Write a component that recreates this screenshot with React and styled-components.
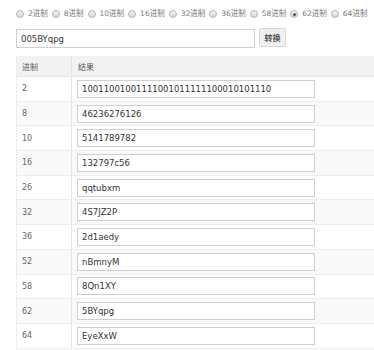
import React, { useState } from "react";
import styled, { createGlobalStyle } from "styled-components";

const GlobalStyle = createGlobalStyle`
  html, body {
    margin: 0;
    padding: 0;
    background: #ffffff;
  }
  body {
    font-family: "DejaVu Sans", Verdana, "Noto Sans CJK SC", sans-serif;
  }
`;

const bases = [2, 8, 10, 16, 32, 36, 58, 62, 64];

const results = [
  ["2", "10011001001111001011111100010101110"],
  ["8", "46236276126"],
  ["10", "5141789782"],
  ["16", "132797c56"],
  ["26", "qqtubxm"],
  ["32", "4S7JZ2P"],
  ["36", "2d1aedy"],
  ["52", "nBmnyM"],
  ["58", "8Qn1XY"],
  ["62", "5BYqpg"],
  ["64", "EyeXxW"],
];

function App() {
  const [base, setBase] = useState(62);
  const [value, setValue] = useState("005BYqpg");

  return (
    <Page>
      <GlobalStyle />
      <RadioRow>
        {bases.map((b) => (
          <Option key={b} onClick={() => setBase(b)}>
            <Dot $checked={base === b} />
            <span>{b}进制</span>
          </Option>
        ))}
      </RadioRow>

      <FormRow>
        <TextInput value={value} onChange={(e) => setValue(e.target.value)} />
        <Button>转换</Button>
      </FormRow>

      <Table>
        <thead>
          <tr>
            <Th $first>进制</Th>
            <Th>结果</Th>
          </tr>
        </thead>
        <tbody>
          {results.map(([b, r], i) => (
            <Row key={b} $striped={i % 2 === 1}>
              <BaseCell>{b}</BaseCell>
              <ResultCell>
                <ResultInput readOnly value={r} />
              </ResultCell>
            </Row>
          ))}
        </tbody>
      </Table>
    </Page>
  );
}

// STYLE COMPONENT
const Page = styled.div`
  padding: 8px 0 0 16px;
  font-size: 8px;
  color: #666;
`;

const RadioRow = styled.div`
  display: flex;
  align-items: center;
  height: 12px;
  font-size: 7.5px;
  color: #777;
`;

const Option = styled.label`
  display: flex;
  align-items: center;
  gap: 4px;
  margin-right: 4px;
  cursor: pointer;
  white-space: nowrap;
  span {
    line-height: 12px;
  }
`;

const Dot = styled.i`
  position: relative;
  display: block;
  width: 6px;
  height: 6px;
  border-radius: 50%;
  border: 1px solid #b4b4b4;
  background: linear-gradient(#f4f4f4, #d6d6d6);
  &::after {
    content: "";
    display: ${(p) => (p.$checked ? "block" : "none")};
    position: absolute;
    left: 1.5px;
    top: 1.5px;
    width: 3px;
    height: 3px;
    border-radius: 50%;
    background: #555;
  }
`;

const FormRow = styled.div`
  display: flex;
  align-items: flex-start;
  gap: 4px;
  margin-top: 9px;
`;

const TextInput = styled.input`
  box-sizing: border-box;
  width: 239px;
  height: 19px;
  padding: 0 4px;
  border: 1px solid #cfcfcf;
  font-family: inherit;
  font-size: 8.5px;
  color: #333;
  outline: none;
`;

const Button = styled.button`
  box-sizing: border-box;
  width: 27px;
  height: 19px;
  margin-top: -1px;
  padding: 0;
  border: 1px solid #d8d8d8;
  border-radius: 2px;
  background: #efefef;
  font-family: inherit;
  font-size: 8px;
  font-weight: bold;
  color: #555;
`;

const Table = styled.table`
  margin-top: 8px;
  width: 358px;
  border-collapse: collapse;
  border-left: 1px solid #ececec;
`;

const Th = styled.th`
  height: 20px;
  padding: 0 0 0 ${(p) => (p.$first ? "5px" : "6px")};
  width: ${(p) => (p.$first ? "49px" : "auto")};
  background: #f2f2f2;
  border-right: ${(p) => (p.$first ? "1px solid #e4e4e4" : "none")};
  border-bottom: 1px solid #e6e6e6;
  text-align: left;
  font-weight: normal;
  color: #555;
`;

const Row = styled.tr`
  background: ${(p) => (p.$striped ? "#f9f9f9" : "#ffffff")};
  td {
    height: 24.7px;
    border-bottom: 1px solid #ececec;
    box-sizing: border-box;
  }
`;

const BaseCell = styled.td`
  padding: 0 0 0 5px;
  border-right: 1px solid #e4e4e4;
  color: #666;
`;

const ResultCell = styled.td`
  padding: 0 0 0 5px;
`;

const ResultInput = styled.input`
  display: block;
  box-sizing: border-box;
  width: 238px;
  height: 18px;
  padding: 0 4px;
  border: 1px solid #cfcfcf;
  background: #fff;
  font-family: inherit;
  font-size: 8.5px;
  color: #333;
  outline: none;
`;

export default App;
